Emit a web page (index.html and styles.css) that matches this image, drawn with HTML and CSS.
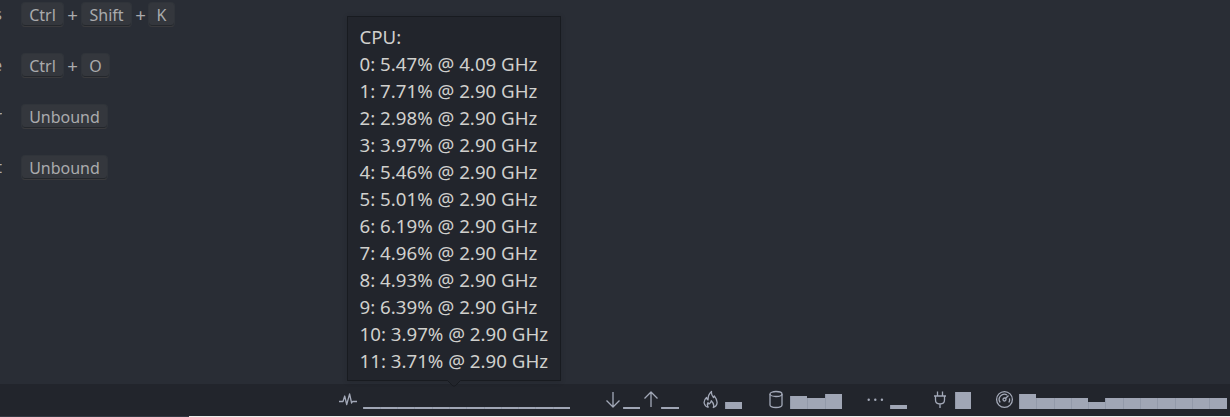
FILE: index.html
```html
<!DOCTYPE html>
<html lang="en">
<head>
<meta charset="utf-8">
<title>CPU monitor</title>
<link rel="stylesheet" href="styles.css">
</head>
<body>
<main class="shortcuts">
  <div class="row"><span class="label"><span>s</span></span><kbd class="ctrl">Ctrl</kbd><i>+</i><kbd class="shift">Shift</kbd><i>+</i><kbd class="key-k">K</kbd></div>
  <div class="row"><span class="label"><span>e</span></span><kbd class="ctrl">Ctrl</kbd><i>+</i><kbd class="key-o">O</kbd></div>
  <div class="row"><span class="label"><span>r</span></span><kbd class="unbound">Unbound</kbd></div>
  <div class="row"><span class="label"><span>t</span></span><kbd class="unbound">Unbound</kbd></div>
</main>
<footer class="bar">
  <div class="group cpu">
    <svg class="pulse" width="20" height="20" viewBox="0 0 20 20"><path d="M1 11.500h4L6.700 6l2 8.500L11.600 4l2 9 1-1.500H19"/></svg>
    <div class="meter"><b class="h2"></b><b class="h2"></b><b class="h2"></b><b class="h2"></b><b class="h2"></b><b class="h2"></b><b class="h2"></b><b class="h2"></b><b class="h2"></b><b class="h2"></b><b class="h2"></b><b class="h2"></b></div>
  </div>
  <div class="group net">
    <svg width="16" height="20" viewBox="0 0 16 20"><path d="M8 2v15M1.500 10.500 8 17l6.500-6.500"/></svg>
    <div class="meter"><b class="h2"></b></div>
    <svg width="16" height="20" viewBox="0 0 16 20"><path d="M8 17V2M1.500 8.500 8 2l6.500 6.500"/></svg>
    <div class="meter"><b class="h2"></b></div>
  </div>
  <div class="group temp">
    <svg width="16" height="20" viewBox="0 0 16 20"><path d="M5.500 17.500C.5 16-.3 11 3.500 7.500c.3 1.300.7 2 1.500 2.500C5 6 6 3.500 8.500 1.500c-.5 3 .7 4.500 2 6 .5-.5.700-1 .8-1.700 4 5 3.700 10-1 11.700 1.200-2.500.2-4.500-2-6.700-.3 2-1.300 2.700-2.300 3.200-.9-.3-1-.8-1-1.500-1 1.700-.7 3.500.5 5"/></svg>
    <div class="meter"><b class="h7"></b></div>
  </div>
  <div class="group disk">
    <svg width="16" height="20" viewBox="0 0 16 20"><ellipse cx="8" cy="4" rx="6" ry="2.500"/><path d="M2 4v11c0 3.300 12 3.300 12 0V4"/></svg>
    <div class="meter"><b class="h13"></b><b class="h11"></b><b class="h15"></b></div>
  </div>
  <div class="group memory">
    <svg class="dots" width="18" height="20" viewBox="0 0 18 20"><circle cx="2.700" cy="9.700" r="1.200"/><circle cx="9.300" cy="9.700" r="1.200"/><circle cx="15.900" cy="9.700" r="1.200"/></svg>
    <div class="meter"><b class="h4"></b></div>
  </div>
  <div class="group power">
    <svg width="14" height="20" viewBox="0 0 14 20"><path d="M4.500 6V1.500M9.500 6V1.500M1 6h12M2.500 6v4c0 5.300 9 5.300 9 0V6M7 14v4"/></svg>
    <div class="meter"><b class="h17"></b></div>
  </div>
  <div class="group speed">
    <svg width="20" height="20" viewBox="0 0 20 20"><circle cx="9.500" cy="9.500" r="7.900"/><path d="M5.200 12.500A5.200 5.200 0 0 1 12.100 5M14.500 8.300a5.200 5.200 0 0 1-.7 4.200M10.200 8.700 13.500 5.500"/><circle cx="9.500" cy="9.500" r="1.500"/></svg>
    <div class="meter"><b class="h15"></b><b class="h11"></b><b class="h11"></b><b class="h11"></b><b class="h7"></b><b class="h11"></b><b class="h11"></b><b class="h11"></b><b class="h11"></b><b class="h11"></b><b class="h11"></b><b class="h11"></b></div>
  </div>
</footer>
<div class="edge"></div>
<aside class="tooltip">
  <div>CPU:</div>
  <div>0: 5.47% @ 4.09 GHz</div>
  <div>1: 7.71% @ 2.90 GHz</div>
  <div>2: 2.98% @ 2.90 GHz</div>
  <div>3: 3.97% @ 2.90 GHz</div>
  <div>4: 5.46% @ 2.90 GHz</div>
  <div>5: 5.01% @ 2.90 GHz</div>
  <div>6: 6.19% @ 2.90 GHz</div>
  <div>7: 4.96% @ 2.90 GHz</div>
  <div>8: 4.93% @ 2.90 GHz</div>
  <div>9: 6.39% @ 2.90 GHz</div>
  <div>10: 3.97% @ 2.90 GHz</div>
  <div>11: 3.71% @ 2.90 GHz</div>
  <svg class="pointer" width="14" height="8" viewBox="0 0 14 8"><path class="fill" d="M0 0h14L8.500 6h-3z"/><path class="line" d="M.5.5 6 6h2L13.500.5"/></svg>
</aside>
</body>
</html>
```
FILE: styles.css
```css
* { box-sizing: border-box; }
body {
  margin: 0;
  height: 417px;
  overflow: hidden;
  display: flex;
  flex-direction: column;
  position: relative;
  background: #292d35;
  font-family: "Noto Sans", sans-serif;
}
.shortcuts {
  height: 384px;
  padding-top: 2px;
  display: flex;
  flex-direction: column;
  gap: 26px;
  font-size: 16px;
  color: #aaabad;
}
.row { display: flex; height: 25px; line-height: 25px; }
.label {
  width: 2px;
  margin-right: 19px;
  display: flex;
  justify-content: flex-end;
  overflow: hidden;
}
kbd {
  height: 25px;
  line-height: 25px;
  border: 1px solid #30343a;
  border-bottom-color: #3a3a3d;
  border-radius: 4px;
  background: #34373d;
  box-shadow: inset 0 -1px #24272c;
  font-family: inherit;
  text-align: center;
  display: flex;
  justify-content: center;
}
.row i {
  width: 17px;
  line-height: 26px;
  text-align: center;
  font-size: 18.670px;
  font-style: normal;
}
.ctrl { width: 43px; }
.shift { width: 51px; }
.key-k { width: 27px; margin-left: -1px; }
.key-o { width: 29px; }
.unbound { width: 87px; }
.bar {
  height: 32px;
  flex: none;
  display: flex;
  align-items: flex-start;
  padding: 5px 0 0 338px;
  background: #22252c;
}
.group { display: flex; align-items: flex-end; height: 20px; }
.group svg {
  flex: none;
  margin-bottom: -1px;
  fill: none;
  stroke: #a3a9b8;
  stroke-width: 1.3;
  stroke-linejoin: round;
}
.group .dots { fill: #a3a9b8; stroke: none; }
.meter { display: flex; align-items: flex-end; height: 20px; margin-left: 4.500px; }
.meter b { width: 17.300px; background: #a0a6b5; box-shadow: inset 1px 0 #9299a9; }
.h2 { height: 2px; }
.h4 { height: 4px; }
.h7 { height: 7px; }
.h11 { height: 11px; }
.h13 { height: 13px; }
.h15 { height: 15px; }
.h17 { height: 17px; }
.cpu { width: 267px; }
.net { width: 98px; }
.net .meter { margin: 0 3px 0 2px; }
.temp { width: 64.500px; }
.temp .meter { margin-left: 6px; }
.disk .meter { margin-left: 6.500px; }
.disk { width: 98px; }
.memory { width: 67.500px; }
.memory .meter { margin-left: 6.500px; }
.power { width: 61.500px; }
.power .meter { margin-left: 7.500px; }
.power .meter b { width: 16px; }
.edge {
  height: 1px;
  flex: none;
  background: linear-gradient(to right, #343943 189px, #eeeeec 189px);
}
.tooltip {
  position: absolute;
  left: 347px;
  top: 16px;
  width: 214px;
  height: 365px;
  padding: 6px 0 0 11.500px;
  border: 1px solid #181b20;
  background: #22252c;
  box-shadow: 0 1px 5px rgba(20, 22, 27, .2);
  color: #d0d0cd;
  font-size: 18.700px;
  line-height: 27px;
  white-space: nowrap;
}
.pointer { position: absolute; left: 99px; top: 363px; }
.pointer .fill { fill: #22252c; }
.pointer .line { fill: none; stroke: #181b20; }
```
